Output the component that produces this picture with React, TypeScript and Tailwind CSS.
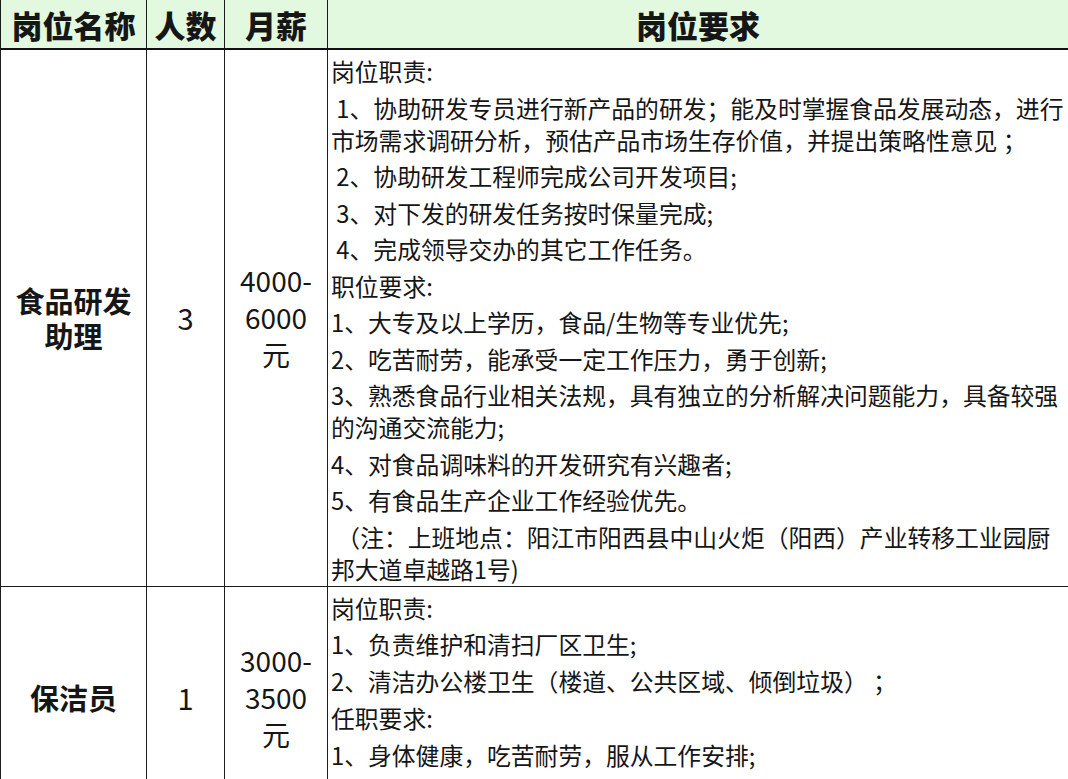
const font = { fontFamily: '"Noto Sans CJK SC", "Noto Sans", sans-serif' };

type Row = {
  name: string[];
  count: string;
  pay: string[];
  lines: string[][];
  gap: string;
};

const rows: Row[] = [
  {
    name: ["食品研发", "助理"],
    count: "3",
    pay: ["4000-", "6000", "元"],
    gap: "gap-[4.5px]",
    lines: [
      ["岗位职责:"],
      [" 1、协助研发专员进行新产品的研发；能及时掌握食品发展动态，进行", "市场需求调研分析，预估产品市场生存价值，并提出策略性意见 ；"],
      [" 2、协助研发工程师完成公司开发项目;"],
      [" 3、对下发的研发任务按时保量完成;"],
      [" 4、完成领导交办的其它工作任务。"],
      ["职位要求:"],
      ["1、大专及以上学历，食品/生物等专业优先;"],
      ["2、吃苦耐劳，能承受一定工作压力，勇于创新;"],
      ["3、熟悉食品行业相关法规，具有独立的分析解决问题能力，具备较强", "的沟通交流能力;"],
      ["4、对食品调味料的开发研究有兴趣者;"],
      ["5、有食品生产企业工作经验优先。"],
      [" （注：上班地点：阳江市阳西县中山火炬（阳西）产业转移工业园厨", "邦大道卓越路1号)"],
    ],
  },
  {
    name: ["保洁员"],
    count: "1",
    pay: ["3000-", "3500", "元"],
    gap: "gap-[4.8px]",
    lines: [
      ["岗位职责:"],
      ["1、负责维护和清扫厂区卫生;"],
      ["2、清洁办公楼卫生（楼道、公共区域、倾倒垃圾） ；"],
      ["任职要求:"],
      ["1、身体健康，吃苦耐劳，服从工作安排;"],
      ["2、有责任心，工作认真细致;"],
    ],
  },
];

export default function App() {
  return (
    <div className="h-[779px] w-[1068px] overflow-hidden bg-white text-[#161616]" style={font}>
      <div className="grid grid-cols-[146px_78px_103px_1fr] border-l border-[#1c1c1c]">
        {["岗位名称", "人数", "月薪", "岗位要求"].map((h, i) => (
          <div
            key={h}
            className={`flex h-[50px] items-center justify-center border-b-2 border-[#111] bg-[#e3f9df] text-[31px] font-black leading-none ${
              i < 3 ? "border-r border-r-[#1c1c1c]" : ""
            }`}
          >
            {h}
          </div>
        ))}

        {rows.map((r) => (
          <div key={r.count} className="contents">
            <div className="flex flex-col items-center justify-center border-r border-b border-[#1c1c1c] text-[29px] font-bold leading-[35px]">
              {r.name.map((n) => (
                <span key={n} className="block">
                  {n}
                </span>
              ))}
            </div>
            <div className="flex items-center justify-center border-r border-b border-[#1c1c1c] text-[29px] leading-none">
              {r.count}
            </div>
            <div className="flex flex-col items-center justify-center border-r border-b border-[#1c1c1c] text-[28px] leading-[37px]">
              {r.pay.map((p) => (
                <span key={p}>{p}</span>
              ))}
            </div>
            <div className={`flex flex-col ${r.gap} border-b border-[#1c1c1c] pt-[5px] pb-[1px] pl-[3px] text-[23.8px] leading-[32px]`}>
              {r.lines.map((p, i) => (
                <p key={i} className="whitespace-pre">
                  {p.map((l, j) => (
                    <span key={j} className="block">
                      {l}
                    </span>
                  ))}
                </p>
              ))}
            </div>
          </div>
        ))}
      </div>
    </div>
  );
}
